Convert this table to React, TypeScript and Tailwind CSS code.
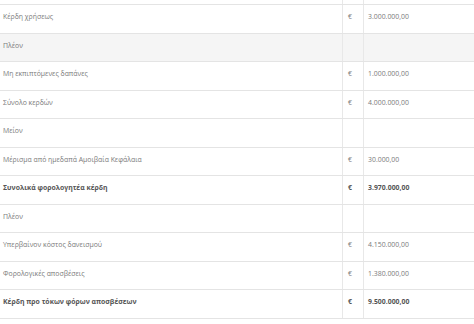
import React from "react";

type Row = { label: string; value?: string; bold?: boolean; grey?: boolean };

const rows: Row[] = [
  { label: "Κέρδη χρήσεως", value: "3.000.000,00" },
  { label: "Πλέον", grey: true },
  { label: "Μη εκπιπτόμενες δαπάνες", value: "1.000.000,00" },
  { label: "Σύνολο κερδών", value: "4.000.000,00" },
  { label: "Μείον" },
  { label: "Μέρισμα από ημεδαπά Αμοιβαία Κεφάλαια", value: "30.000,00" },
  { label: "Συνολικά φορολογητέα κέρδη", value: "3.970.000,00", bold: true },
  { label: "Πλέον" },
  { label: "Υπερβαίνον κόστος δανεισμού", value: "4.150.000,00" },
  { label: "Φορολογικές αποσβέσεις", value: "1.380.000,00" },
  { label: "Κέρδη προ τόκων φόρων αποσβέσεων", value: "9.500.000,00", bold: true },
];

export default function App() {
  return (
    <div
      className="w-[474px] h-[324px] bg-white overflow-hidden text-[6.9px] leading-[11px] text-[#7a7a7a]"
      style={{ fontFamily: '"Open Sans", "Noto Sans", sans-serif' }}
    >
      <div className="grid grid-cols-[342px_21px_1fr] h-[4px]">
        <div />
        <div className="border-l border-[#e8e8e8]" />
        <div className="border-l border-[#e8e8e8]" />
      </div>
      {rows.map((r, i) => (
        <div
          key={i}
          className={
            "grid grid-cols-[342px_21px_1fr] border-t border-[#e4e4e4] " +
            (i % 2 === 0 ? "h-[29px] " : "h-[28px] ") +
            (r.grey ? "bg-[#f5f5f5] " : "bg-white ") +
            (r.bold ? "font-bold text-[#555555]" : "")
          }
        >
          <div className="pl-[3px] pt-[6px] whitespace-nowrap">{r.label}</div>
          <div className="border-l border-[#e8e8e8] pl-[5px] pt-[6px]">{r.value ? "€" : ""}</div>
          <div className="border-l border-[#e8e8e8] pl-[4px] pt-[6px]">{r.value ?? ""}</div>
        </div>
      ))}
      <div className="border-t border-[#e4e4e4]" />
    </div>
  );
}
